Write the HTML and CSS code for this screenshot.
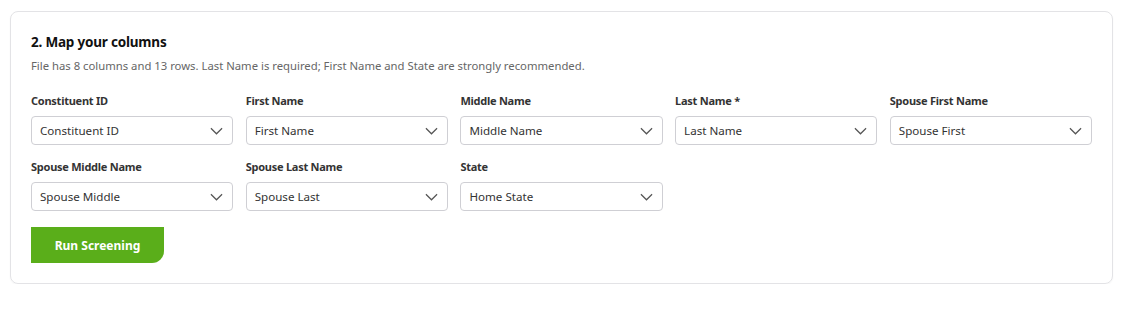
FILE: index.html
```html
<!DOCTYPE html>
<html>
<head>
<meta charset="utf-8">
<link rel="stylesheet" href="styles.css">
</head>
<body>
<div class="page">
  <section class="card">
    <h2 class="title">2. Map your columns</h2>
    <p class="sub">File has 8 columns and 13 rows. Last Name is required; First Name and State are strongly recommended.</p>
    <div class="grid">
      <div class="field"><label>Constituent ID</label><div class="select"><span>Constituent ID</span><svg viewBox="0 0 14 8"><path d="M1 1l6 6 6-6"/></svg></div></div>
      <div class="field"><label>First Name</label><div class="select"><span>First Name</span><svg viewBox="0 0 14 8"><path d="M1 1l6 6 6-6"/></svg></div></div>
      <div class="field"><label>Middle Name</label><div class="select"><span>Middle Name</span><svg viewBox="0 0 14 8"><path d="M1 1l6 6 6-6"/></svg></div></div>
      <div class="field"><label>Last Name *</label><div class="select"><span>Last Name</span><svg viewBox="0 0 14 8"><path d="M1 1l6 6 6-6"/></svg></div></div>
      <div class="field"><label>Spouse First Name</label><div class="select"><span>Spouse First</span><svg viewBox="0 0 14 8"><path d="M1 1l6 6 6-6"/></svg></div></div>
      <div class="field"><label>Spouse Middle Name</label><div class="select"><span>Spouse Middle</span><svg viewBox="0 0 14 8"><path d="M1 1l6 6 6-6"/></svg></div></div>
      <div class="field"><label>Spouse Last Name</label><div class="select"><span>Spouse Last</span><svg viewBox="0 0 14 8"><path d="M1 1l6 6 6-6"/></svg></div></div>
      <div class="field"><label>State</label><div class="select"><span>Home State</span><svg viewBox="0 0 14 8"><path d="M1 1l6 6 6-6"/></svg></div></div>
    </div>
    <button class="btn">Run Screening</button>
  </section>
</div>
</body>
</html>
```
FILE: styles.css
```css
* { box-sizing: border-box; }
html, body { margin: 0; padding: 0; background: #fff; }
body { font-family: "Segoe UI", "Noto Sans", "Open Sans", sans-serif; color: #222; }
.page { padding: 11px 11px 0 10px; }
.card {
  border: 1px solid #e3e3e6;
  border-radius: 8px;
  padding: 20px 20px 20px 20px;
  box-shadow: 0 1px 2px rgba(0,0,0,0.04);
}
.title { margin: 0; font-size: 13.5px; line-height: 20px; font-weight: 700; color: #111; letter-spacing: -0.2px; }
.sub { margin: 6px 0 0; font-size: 11.3px; line-height: 16px; color: #666; }
.grid {
  margin-top: 19px;
  display: grid;
  grid-template-columns: repeat(5, 1fr);
  column-gap: 12.5px;
  row-gap: 14px;
}
.field label { display: block; font-size: 11px; line-height: 16px; font-weight: 700; color: #333; letter-spacing: -0.25px; }
.select {
  margin-top: 7px;
  height: 29px;
  border: 1px solid #cfcfd4;
  border-radius: 4px;
  display: flex;
  align-items: center;
  justify-content: space-between;
  padding: 0 9px 0 8px;
  font-size: 11.6px;
  color: #333;
}
.select svg { width: 13px; height: 8px; fill: none; stroke: #555; stroke-width: 1.3; }
.btn {
  margin-top: 16px;
  height: 36px;
  width: 133px;
  border: 0;
  background: #5aae1a;
  color: #fff;
  font-family: inherit;
  font-size: 12px;
  font-weight: 700;
  border-radius: 0 0 12px 0;
  padding: 0;
  display: block;
}
```
